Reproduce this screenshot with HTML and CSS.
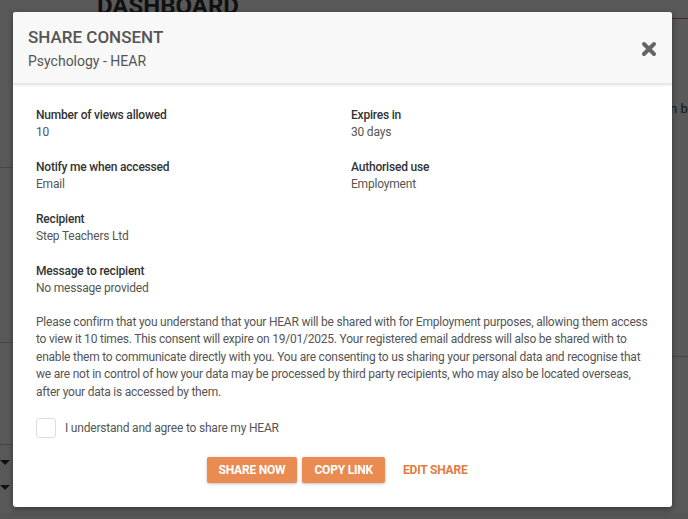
FILE: index.html
```html
<!DOCTYPE html>
<html lang="en">
<head>
    <meta charset="UTF-8" />
    <title>Share consent</title>
    <link rel="stylesheet" href="styles.css">
</head>
<body>
    <div class="page">
        <h1 class="page-title">DASHBOARD</h1>
        <div class="page-rule rule-top"></div>
        <div class="page-side-text">n b</div>
        <div class="page-rule rule-a"></div>
        <div class="page-rule rule-b"></div>
        <div class="page-rule rule-c"></div>
        <div class="page-rule rule-d"></div>
        <span class="page-caret caret-a"></span>
        <span class="page-caret caret-b"></span>
    </div>

    <div class="overlay"></div>

    <div class="modal">
        <div class="modal-header">
            <div>
                <h2 class="modal-title">SHARE CONSENT</h2>
                <div class="modal-subtitle">Psychology - HEAR</div>
            </div>
            <button class="close-btn" aria-label="Close">
                <svg width="16" height="16" viewBox="0 0 16 16">
                    <path d="M3 3 L13 13 M13 3 L3 13" stroke="#666" stroke-width="4" stroke-linecap="round" />
                </svg>
            </button>
        </div>

        <div class="modal-body">
            <div class="detail-grid">
                <div class="detail">
                    <div class="detail-label">Number of views allowed</div>
                    <div class="detail-value">10</div>
                </div>
                <div class="detail">
                    <div class="detail-label">Expires in</div>
                    <div class="detail-value">30 days</div>
                </div>
                <div class="detail">
                    <div class="detail-label">Notify me when accessed</div>
                    <div class="detail-value">Email</div>
                </div>
                <div class="detail">
                    <div class="detail-label">Authorised use</div>
                    <div class="detail-value">Employment</div>
                </div>
                <div class="detail">
                    <div class="detail-label">Recipient</div>
                    <div class="detail-value">Step Teachers Ltd</div>
                </div>
                <div class="detail"></div>
                <div class="detail">
                    <div class="detail-label">Message to recipient</div>
                    <div class="detail-value">No message provided</div>
                </div>
            </div>

            <p class="consent-text">Please confirm that you understand that your HEAR will be shared with for Employment purposes, allowing them access to view it 10 times. This consent will expire on 19/01/2025. Your registered email address will also be shared with to enable them to communicate directly with you. You are consenting to us sharing your personal data and recognise that we are not in control of how your data may be processed by third party recipients, who may also be located overseas, after your data is accessed by them.</p>

            <label class="agree">
                <span class="checkbox"></span>
                I understand and agree to share my HEAR
            </label>

            <div class="actions">
                <button class="btn">SHARE NOW</button>
                <button class="btn">COPY LINK</button>
                <button class="btn btn-flat">EDIT SHARE</button>
            </div>
        </div>
    </div>
</body>
</html>
```

FILE: styles.css
```css
body {
    margin: 0;
    font-family: Roboto, "Liberation Sans", sans-serif;
    background-color: #f2f2f2;
    width: 688px;
    height: 519px;
    overflow: hidden;
    position: relative;
}

/* page behind the dialog */
.page {
    position: relative;
    height: 519px;
    background-color: #fff;
}

.page-title {
    margin: -6px 0 0 0;
    padding-left: 97px;
    font-size: 24px;
    font-weight: bold;
    line-height: 24px;
    color: #333;
}

.page-rule {
    position: absolute;
    height: 1px;
    background-color: #ccc;
}

.rule-top { top: 24px; left: 672px; right: 0; background-color: #c77; }
.rule-a { top: 173px; left: 0; width: 13px; }
.rule-b { top: 348px; left: 0; width: 13px; }
.rule-c { top: 450px; left: 0; width: 13px; }
.rule-d { top: 362px; left: 672px; right: 0; }

.page-side-text {
    position: absolute;
    top: 107px;
    left: 670px;
    font-size: 13px;
    color: #444;
}

.page-caret {
    position: absolute;
    left: 0;
    border-left: 5px solid transparent;
    border-right: 5px solid transparent;
    border-top: 5px solid #333;
}

.caret-a { top: 466px; }
.caret-b { top: 491px; }

.overlay {
    position: absolute;
    inset: 0;
    background-color: rgba(0, 0, 0, 0.65);
}

/* dialog */
.modal {
    position: absolute;
    top: 12px;
    left: 13px;
    width: 659px;
    background-color: #fff;
    border-radius: 3px;
    box-shadow: 0 2px 6px rgba(0, 0, 0, 0.4);
    overflow: hidden;
}

.modal-header {
    display: flex;
    justify-content: space-between;
    align-items: center;
    padding: 15px 23px 12px 15px;
    background-color: #f8f8f8;
    border-bottom: 2px solid #e8e8e8;
    box-shadow: 0 1px 2px rgba(0, 0, 0, 0.06);
}

.modal-title {
    margin: 0;
    font-size: 17px;
    font-weight: 500;
    line-height: 20px;
    color: #555;
}

.modal-subtitle {
    margin-top: 4px;
    font-size: 14px;
    line-height: 20px;
    color: #555;
}

.close-btn {
    background: none;
    border: none;
    padding: 0;
    margin-right: -8px;
    width: 16px;
    height: 16px;
    cursor: pointer;
}

.modal-body {
    padding: 22px 22px 24px 23px;
    font-size: 12px;
    letter-spacing: -0.2px;
    color: #555;
}

.detail-grid {
    display: grid;
    grid-template-columns: 315px 1fr;
    row-gap: 18px;
}

.detail-label {
    font-weight: 500;
    line-height: 17px;
    color: #333;
}

.detail-value {
    line-height: 17px;
}

.consent-text {
    margin: 17px 0 0 0;
    line-height: 17.4px;
    letter-spacing: -0.22px;
}

.agree {
    display: flex;
    align-items: center;
    gap: 9px;
    margin-top: 17px;
    font-size: 12px;
    color: #555;
}

.checkbox {
    width: 18px;
    height: 18px;
    border: 1px solid #ddd;
    border-radius: 3px;
    background-color: #fff;
}

.actions {
    display: flex;
    justify-content: center;
    gap: 5px;
    margin-top: 19px;
    padding-left: 5px;
}

.btn {
    height: 26px;
    padding: 0 12px;
    border: none;
    border-radius: 2px;
    background-color: #ea8b51;
    color: #fff;
    font-family: Roboto, "Liberation Sans", sans-serif;
    font-size: 12px;
    font-weight: bold;
    letter-spacing: -0.2px;
    box-shadow: 0 1px 3px rgba(0, 0, 0, 0.25);
    cursor: pointer;
}

.btn-flat {
    background-color: transparent;
    color: #e27b3e;
    box-shadow: none;
    padding: 0 17px 0 13px;
}
```
